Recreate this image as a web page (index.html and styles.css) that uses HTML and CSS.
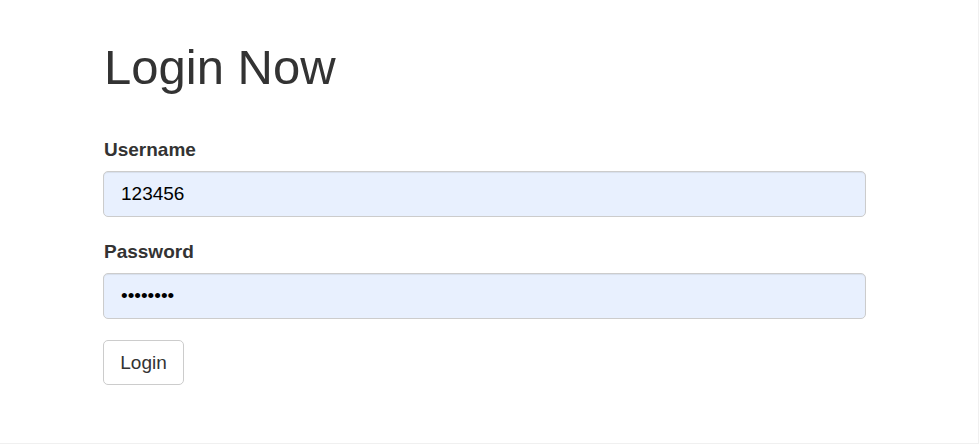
FILE: index.html
```html
<!DOCTYPE html>
<html>
<head>
<meta charset="utf-8">
<title>Login Now</title>
<link rel="stylesheet" href="styles.css">
</head>
<body>
<div class="page">
  <form class="login">
    <h1 class="title">Login Now</h1>
    <div class="group">
      <label class="label" for="u">Username</label>
      <input class="field" id="u" type="text" value="123456">
    </div>
    <div class="group">
      <label class="label" for="p">Password</label>
      <input class="field" id="p" type="password" value="12345678">
    </div>
    <button class="btn" type="button">Login</button>
  </form>
</div>
</body>
</html>
```
FILE: styles.css
```css
html, body {
  margin: 0;
  padding: 0;
  background: #fff;
}
.page {
  box-sizing: border-box;
  width: 979px;
  height: 444px;
  border-right: 1px solid #f0f0f0;
  border-bottom: 1px solid #f0f0f0;
  padding: 40px 0 0 103px;
  font-family: "Liberation Sans", Arial, sans-serif;
  color: #333;
}
.login {
  width: 763px;
  display: flex;
  flex-direction: column;
  align-items: flex-start;
}
.title {
  margin: 0 0 42px 1px;
  font-size: 49px;
  line-height: 54px;
  font-weight: normal;
  color: #333;
}
.group {
  display: flex;
  flex-direction: column;
  align-self: stretch;
  margin-bottom: 21px;
}
.label {
  font-size: 19px;
  line-height: 27px;
  font-weight: bold;
  margin: 0 0 8px 1px;
  color: #333;
}
.field {
  box-sizing: border-box;
  height: 46px;
  width: 100%;
  padding: 0 17px;
  border: 1px solid #ccc;
  border-radius: 5px;
  background: #e8f0fe;
  font-family: "Liberation Sans", Arial, sans-serif;
  font-size: 19px;
  color: #000;
  box-shadow: inset 0 1px 1px rgba(0,0,0,0.075);
  outline: none;
}
.btn {
  margin-top: 0;
  box-sizing: border-box;
  width: 81px;
  height: 45px;
  border: 1px solid #ccc;
  border-radius: 5px;
  background: #fff;
  font-family: "Liberation Sans", Arial, sans-serif;
  font-size: 19px;
  color: #333;
  padding: 0;
}
```
